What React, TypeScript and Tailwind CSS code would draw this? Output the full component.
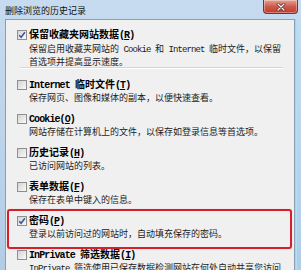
import React from 'react';

const cjk = "font-['Noto_Sans_CJK_SC',sans-serif]";

function L({ children }: { children: React.ReactNode }) {
  return <span className="font-['Liberation_Mono',monospace] tracking-[-0.9px]">{children}</span>;
}

function Key({ k }: { k: string }) {
  return (
    <L>
      (<span className="underline underline-offset-1">{k}</span>)
    </L>
  );
}

function Box({ checked }: { checked?: boolean }) {
  return (
    <span className="flex h-[10px] w-[10px] shrink-0 items-center justify-center border border-[#8e8f8f] bg-linear-to-br from-[#d4d4d4] to-[#fafafa]">
      {checked && (
        <svg viewBox="0 0 8 8" className="h-[8px] w-[8px]">
          <path d="M1.2 4.2 L3.1 6.3 L6.9 1.3" fill="none" stroke="#3b5391" strokeWidth="1.5" />
        </svg>
      )}
    </span>
  );
}

function Item({ checked, label, desc, gap = 'mt-[1px]' }: { checked?: boolean; label: React.ReactNode; desc: React.ReactNode; gap?: string }) {
  return (
    <div className="flex flex-col pl-[11px]">
      <div className="flex h-[12px] items-center gap-[2px]">
        <Box checked={checked} />
        <span className="whitespace-nowrap text-[10px] font-bold leading-[12px] text-black">{label}</span>
      </div>
      <div className={`${gap} whitespace-nowrap pl-[12px] text-[9px] leading-[11px] text-[#1b1b1b]`}>{desc}</div>
    </div>
  );
}

export default function App() {
  return (
    <div className={`${cjk} h-[270px] w-[301px] overflow-hidden bg-linear-to-b from-[#c6dbef] to-[#b3cce6]`}>
      {/* title bar */}
      <div className="flex h-[19px] items-start justify-between">
        <span className="pl-[5px] pt-[5px] text-[9px] leading-[12px] text-[#111]">删除浏览的历史记录</span>
        <div className="mr-[3px] flex h-[14px] w-[35px] items-center justify-center rounded-b-[4px] border border-t-0 border-[#6e3430] bg-linear-to-b from-[#e3a093] via-[#cf5a4c] to-[#c2382c] shadow-[inset_0_0_0_1px_rgba(255,255,255,0.35)]">
          <svg viewBox="0 0 10 8" className="h-[8px] w-[10px]">
            <path d="M2 1 L8 7 M8 1 L2 7" stroke="#5a1d18" strokeWidth="2.6" strokeLinecap="round" />
            <path d="M2 1 L8 7 M8 1 L2 7" stroke="#ffffff" strokeWidth="1.4" strokeLinecap="round" />
          </svg>
        </div>
      </div>

      {/* client panel */}
      <div className="ml-[5px] mr-[6px] flex h-[260px] flex-col border border-[#8d9db1] bg-[#f0f0f0] shadow-[1px_0_0_#9fd6f0,2px_0_0_#aee0f5]">
        <div className="flex flex-col pt-[9px]">
          <Item
            checked
            gap="mt-[2px]"
            label={<>保留收藏夹网站数据<Key k="R" /></>}
            desc={
              <>
                保留启用收藏夹网站的<L> Cookie </L>和<L> Internet </L>临时文件，以保留
                <br />
                首选项并提高显示速度。
              </>
            }
          />
          <div className="ml-[14px] mr-[11px] mt-0 border-t border-b border-t-[#d5d5d5] border-b-white" />
          <div className="mt-[10px] flex flex-col gap-[10px]">
            <Item label={<><L>Internet </L>临时文件<Key k="T" /></>} desc="保存网页、图像和媒体的副本，以便快速查看。" />
            <Item label={<><L>Cookie</L><Key k="O" /></>} desc="网站存储在计算机上的文件，以保存如登录信息等首选项。" />
            <Item label={<>历史记录<Key k="H" /></>} desc="已访问网站的列表。" />
            <Item label={<>表单数据<Key k="F" /></>} desc="保存在表单中键入的信息。" />
            <div className="relative">
              <Item checked label={<>密码<Key k="P" /></>} desc="登录以前访问过的网站时，自动填充保存的密码。" />
              <div className="absolute -top-[6px] -bottom-[10px] left-[1px] right-[2px] rounded-[3px] border-2 border-[#d4202b] shadow-[0_0_1px_#f3a0a5]" />
            </div>
            <Item
              label={<><L>InPrivate </L>筛选数据<Key k="I" /></>}
              desc={
                <>
                  <L>InPrivate </L>筛选使用已保存数据检测网站在何处自动共享您访问
                  <br />
                  的详细信息。
                </>
              }
            />
          </div>
        </div>
      </div>
    </div>
  );
}
